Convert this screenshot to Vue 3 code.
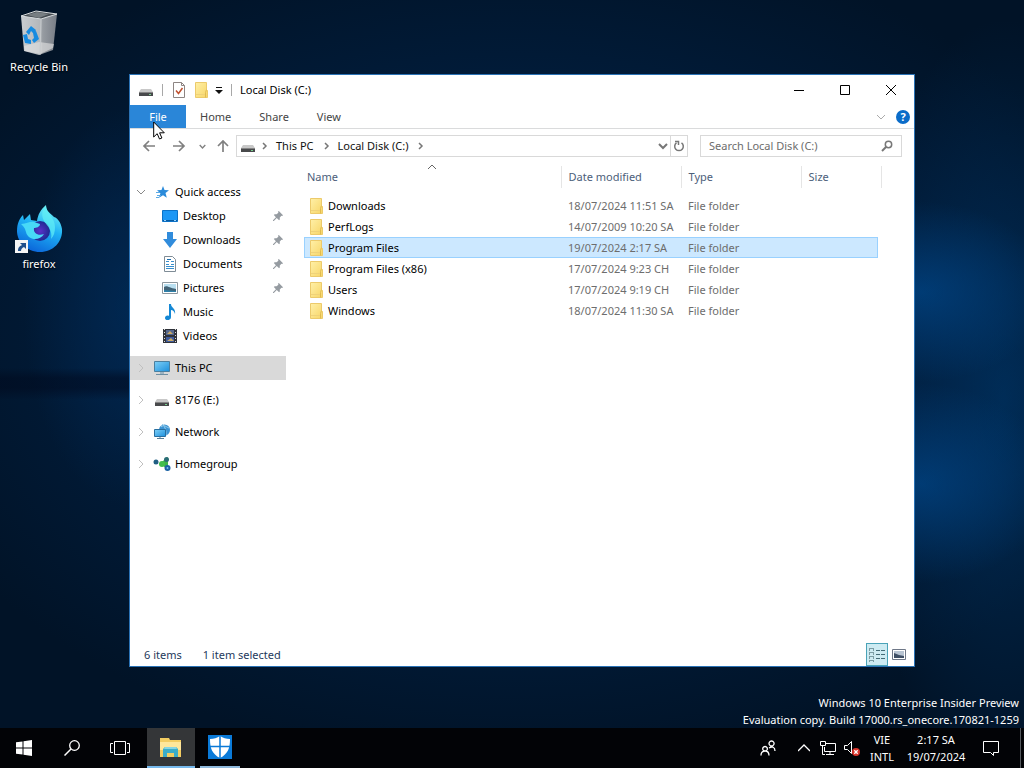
<template>
  <div class="desktop">
    <!-- shared icon shapes -->
    <svg class="icon-defs" aria-hidden="true">
      <defs>
        <linearGradient id="g-folder" x1="0" y1="0" x2="1" y2="1">
          <stop offset="0" stop-color="#fff0a8" />
          <stop offset="1" stop-color="#f7d566" />
        </linearGradient>
        <linearGradient id="g-screen" x1="0" y1="0" x2="1" y2="1">
          <stop offset="0" stop-color="#7fd0f7" />
          <stop offset="1" stop-color="#1c8fdc" />
        </linearGradient>
        <linearGradient id="g-bin" x1="0" y1="0" x2="1" y2="0">
          <stop offset="0" stop-color="#c9cdd0" />
          <stop offset="0.55" stop-color="#b2b6ba" />
          <stop offset="0.6" stop-color="#979ca2" />
          <stop offset="1" stop-color="#777d86" />
        </linearGradient>
        <linearGradient id="g-fox" x1="0.7" y1="0" x2="0.3" y2="1">
          <stop offset="0" stop-color="#74f4f5" />
          <stop offset="0.45" stop-color="#1fb2f5" />
          <stop offset="1" stop-color="#0a62d8" />
        </linearGradient>
        <radialGradient id="g-globe">
          <stop offset="0" stop-color="#5b31c9" />
          <stop offset="1" stop-color="#1d2a91" />
        </radialGradient>

        <symbol id="i-drive" viewBox="0 0 16 16">
          <path d="M3 7h10l2 3H1z" fill="#c8c8c8" />
          <path d="M1 10h14v4H1z" fill="#48494b" />
          <path d="M1 10h14v1H1z" fill="#858585" />
          <path d="M11 12h2v1h-2z" fill="#79d08e" />
        </symbol>
        <symbol id="i-folder" viewBox="0 0 16 16">
          <path d="M2.500.5h11v7l1 1v7h-12z" fill="url(#g-folder)" stroke="#ecca6b" />
          <path d="M12.500 15.500v-5l1-3" fill="none" stroke="#e0bb50" />
          <path d="M3 12.500h9" stroke="#efd27a" />
        </symbol>
        <symbol id="i-check" viewBox="0 0 16 16">
          <path d="M2.500.5h8l3 3v12h-11z" fill="#fff" stroke="#8d8583" />
          <path d="M10.500.5v3h3" fill="none" stroke="#8d8583" />
          <path d="M5 8.500l2.500 3 4-5.500" fill="none" stroke="#c0502e" stroke-width="1.500" />
        </symbol>
        <symbol id="i-star" viewBox="0 0 18 16">
          <path d="M10 2l1.500 4 4.500.200-3.500 2.800 1.300 4.700-3.800-2.500-4 2.600 1.400-4.600L4 6.200 8.500 6z" fill="#2b8bda" />
          <path d="M3 8.500h4M4 11.500h4M3 13.500h3" stroke="#5aa9e4" />
        </symbol>
        <symbol id="i-desktop" viewBox="0 0 16 16">
          <path d="M.5 2.500h15v11H.5z" fill="#1c97f5" stroke="#0b72c8" />
          <path d="M1 12.500h14" stroke="#08599f" />
          <path d="M2 12.500h2M12 12.500h2" stroke="#9ad4ff" />
        </symbol>
        <symbol id="i-down" viewBox="0 0 16 16">
          <path d="M5 0h6v7h4l-7 9-7-9h4z" fill="#318cdc" />
        </symbol>
        <symbol id="i-doc" viewBox="0 0 16 16">
          <path d="M2.500.5h8l3 3v12h-11z" fill="#fff" stroke="#7f8c96" />
          <path d="M4 5.500h3M9 5.500h3M4 8.500h3M9 8.500h3M4 10.500h8M4 12.500h8" stroke="#398fcd" />
          <path d="M5 3.500h4" stroke="#1c6eae" />
        </symbol>
        <symbol id="i-pic" viewBox="0 0 16 16">
          <path d="M.5 2.500h15v11H.5z" fill="#fff" stroke="#8c979e" />
          <path d="M2 4h12v8H2z" fill="#b9dff0" />
          <path d="M2 7c3-2 5 1 12 2v3H2z" fill="#436376" />
          <path d="M2 10l12 1v1H2z" fill="#2e80a9" />
        </symbol>
        <symbol id="i-music" viewBox="0 0 16 16">
          <path d="M7 0h2c0 4 5 4 4 10-1-3-2-4-4-4v7c0 4-6 4-6 1 0-2 2-3 4-2z" fill="#1588d5" />
        </symbol>
        <symbol id="i-video" viewBox="0 0 16 16">
          <path d="M1 1h14v14H1z" fill="#30333a" />
          <path d="M4 2h8v5H4z" fill="#55688f" />
          <path d="M4 9h8v5H4z" fill="#3e5b9d" />
          <path d="M5 6l3-3 3 3zM5 13l4-3 3 3z" fill="#c9a968" />
          <path d="M2.500 1v14M13.500 1v14" stroke="#dadada" stroke-dasharray="1 2" />
        </symbol>
        <symbol id="i-pc" viewBox="0 0 18 16">
          <path d="M1.500 1.500h15v10h-15z" fill="url(#g-screen)" stroke="#4b7f9f" />
          <path d="M7 12h4v2H7z" fill="#9db4c2" />
          <path d="M3 14.500h12" stroke="#6d8ea2" />
        </symbol>
        <symbol id="i-net" viewBox="0 0 18 16">
          <circle cx="11.500" cy="6" r="5.500" fill="#3b93d3" />
          <path d="M8 3c3-3 5 0 8 1M9 0c4 3 4 8 4 11" fill="none" stroke="#95cdec" />
          <path d="M1.500 5.500h11v7h-11z" fill="url(#g-screen)" stroke="#286e9f" />
          <path d="M4 14.500h7M7 13v2" stroke="#5a7f97" />
        </symbol>
        <symbol id="i-home" viewBox="0 0 18 16">
          <path d="M9 7l5-4v9z" fill="#3bb34a" stroke="#3bb34a" stroke-width="2" />
          <circle cx="3" cy="6" r="2.500" fill="#205e83" />
          <circle cx="9" cy="8" r="3" fill="#43bd4d" />
          <circle cx="13.500" cy="3.500" r="2.500" fill="#2a6d75" />
          <circle cx="14.500" cy="12" r="3" fill="#1b62a5" />
          <circle cx="14.500" cy="12" r="1" fill="#7bbdec" />
        </symbol>
        <symbol id="i-pin" viewBox="0 0 12 12">
          <path d="M7 0l5 5-1 1-1-.3L8 8l.3 2-1 1L4.500 8.500 1 12H0v-1l3.500-3.500L1 4.800l1-1 2.200.2L6.500 2 6 1z" fill="#959ba1" />
        </symbol>
        <symbol id="i-right" viewBox="0 0 10 10">
          <path d="M3 1l4 4-4 4" fill="none" stroke="currentColor" />
        </symbol>
        <symbol id="i-crumb" viewBox="0 0 8 10">
          <path d="M3 2l3 3-3 3" fill="none" stroke="currentColor" stroke-width="1.500" />
        </symbol>
        <symbol id="i-chev" viewBox="0 0 10 10">
          <path d="M1 3l4 4 4-4" fill="none" stroke="currentColor" />
        </symbol>
        <symbol id="i-chev-bold" viewBox="0 0 10 10">
          <path d="M1 3l4 4 4-4" fill="none" stroke="currentColor" stroke-width="2" />
        </symbol>
        <symbol id="i-arrow" viewBox="0 0 14 14">
          <path d="M13 7H2M7 2L2 7l5 5" fill="none" stroke="currentColor" stroke-width="1.700" />
        </symbol>
      </defs>
    </svg>

    <div class="shortcuts">
      <button class="shortcut" type="button">
        <svg viewBox="0 0 48 48">
          <path d="M11 7l16-4 20 2-4 36-14 5-15-4z" transform="translate(-5 1)" fill="url(#g-bin)" />
          <path d="M6 8l15-5 21 3-16 5z" fill="#444b51" stroke="#d8dcde" />
          <path d="M12 7l10-3 12 2-10 4z" fill="#777e82" />
          <path d="M9 38l15-4 15 2-1 4-13 6-15-3z" fill="#e4e4e4" opacity="0.600" />
          <path d="M26 11l-1 36" stroke="#c6cacd" />
          <path d="M11 24l5-6 5 4-2 4-3-3-2 4zM21 23l3 8-5 4-2-3 2-2-1-5zM16 36l-6-1-2-8 4-1 1 5 3 1z" fill="#168be0" />
        </svg>
        <span>Recycle Bin</span>
      </button>
      <button class="shortcut" type="button">
        <svg viewBox="0 0 48 48">
          <path
            d="M31 0c0 6 4 8 8 12 4 1 7 6 8 12 1 13-9 23-22 23S2 37 2 26c0-7 2-12 6-16l1 5 6-6 1 6 6 1c1-6 3-11 9-16z"
            fill="url(#g-fox)"
          />
          <circle cx="25" cy="26" r="10" fill="url(#g-globe)" />
          <path d="M6 19c6 0 9-3 13-2l6 2c0 3-4 4-6 4-1 6 5 8 10 6-4 7-16 7-18-2-1-4-2-5-5-8z" fill="#48d9f7" />
          <path d="M31 1c0 7 9 11 9 21 0 5-1 9-4 12 2-9-4-13-7-18-3-6-2-11 2-15z" fill="#62f0f5" opacity="0.700" />
          <path d="M0 35h13v13H0z" fill="#f5f5f5" />
          <path d="M3 46c0-4 2-5 4-6l-2-2h6v6l-2-2c-2 1-3 2-3 4z" fill="#1f4f8c" />
        </svg>
        <span>firefox</span>
      </button>
    </div>

    <main class="window">
      <header class="titlebar">
        <svg class="ico"><use href="#i-drive" /></svg>
        <i class="divider"></i>
        <button type="button" aria-label="Properties"><svg class="ico"><use href="#i-check" /></svg></button>
        <button type="button" aria-label="New folder"><svg class="ico"><use href="#i-folder" /></svg></button>
        <button type="button" aria-label="Customize" class="customize">
          <svg viewBox="0 0 8 8"><path d="M1 1.500h6" stroke="#111" /><path d="M0 4h8L4 8z" fill="#111" /></svg>
        </button>
        <i class="divider"></i>
        <h1>Local Disk (C:)</h1>
        <div class="controls">
          <button type="button" aria-label="Minimize">
            <svg viewBox="0 0 12 12"><path d="M1 6.500h10" stroke="#000" /></svg>
          </button>
          <button type="button" aria-label="Maximize">
            <svg viewBox="0 0 12 12"><path d="M1.500 1.500h9v9h-9z" fill="none" stroke="#000" /></svg>
          </button>
          <button type="button" aria-label="Close">
            <svg viewBox="0 0 12 12"><path d="M1 1l10 10M11 1L1 11" stroke="#000" /></svg>
          </button>
        </div>
      </header>

      <nav class="ribbon">
        <button v-for="tab in tabs" :key="tab" type="button" :class="{ file: tab === 'File' }">{{ tab }}</button>
        <div class="ribbon-end">
          <button type="button" aria-label="Expand ribbon" class="expand"><svg><use href="#i-chev" /></svg></button>
          <button type="button" class="help">?</button>
        </div>
      </nav>

      <div class="toolbar">
        <button type="button" aria-label="Back"><svg><use href="#i-arrow" /></svg></button>
        <button type="button" aria-label="Forward"><svg class="flip"><use href="#i-arrow" /></svg></button>
        <button type="button" aria-label="Recent locations" class="recent"><svg><use href="#i-chev-bold" /></svg></button>
        <button type="button" aria-label="Up" class="up"><svg class="turn"><use href="#i-arrow" /></svg></button>
        <div class="address">
          <svg class="ico"><use href="#i-drive" /></svg>
          <svg class="crumb-sep"><use href="#i-crumb" /></svg>
          <template v-for="crumb in crumbs" :key="crumb">
            <button type="button">{{ crumb }}</button>
            <svg class="crumb-sep"><use href="#i-crumb" /></svg>
          </template>
          <button type="button" aria-label="Previous locations" class="drop"><svg><use href="#i-chev-bold" /></svg></button>
          <button type="button" aria-label="Refresh" class="refresh">
            <svg viewBox="0 0 12 12">
              <path d="M3.500 2.800a4.300 4.300 0 1 0 5 0M2 1.500h3.500V5" fill="none" stroke="#777" stroke-width="1.500" />
            </svg>
          </button>
        </div>
        <div class="search">
          <input v-model="query" type="text" aria-label="Search Local Disk (C:)" placeholder="Search Local Disk (C:)" />
          <svg viewBox="0 0 12 12">
            <circle cx="7.500" cy="4.500" r="3.200" fill="none" stroke="#777" stroke-width="1.500" />
            <path d="M5 7L1 11" stroke="#777" stroke-width="2" />
          </svg>
        </div>
      </div>

      <div class="body">
        <aside class="tree">
          <ul v-for="group in tree" :key="group.name">
            <li>
              <button type="button" class="node" :class="{ current: group.name === 'This PC' }">
                <svg class="twist" :class="{ open: group.items }">
                  <use :href="group.items ? '#i-chev' : '#i-right'" />
                </svg>
                <svg class="group-ico"><use :href="'#i-' + group.icon" /></svg>
                {{ group.name }}
              </button>
            </li>
            <li v-for="item in group.items" :key="item.name">
              <button type="button" class="node child">
                <svg class="ico"><use :href="'#i-' + item.icon" /></svg>
                {{ item.name }}
                <svg v-if="item.pinned" class="pin"><use href="#i-pin" /></svg>
              </button>
            </li>
          </ul>
        </aside>

        <section class="files">
          <table>
            <colgroup>
              <col />
              <col class="col-mid" />
              <col class="col-mid" />
              <col class="col-size" />
            </colgroup>
            <thead>
              <tr>
                <th>Name<svg class="sort"><use href="#i-chev" /></svg></th>
                <th>Date modified</th>
                <th>Type</th>
                <th>Size</th>
              </tr>
            </thead>
            <tbody>
              <tr
                v-for="file in files"
                :key="file.name"
                :class="{ selected: file.name === selected }"
                @click="selected = file.name"
              >
                <td class="name">
                  <span><svg class="ico"><use href="#i-folder" /></svg>{{ file.name }}</span>
                </td>
                <td>{{ file.date }}</td>
                <td>File folder</td>
                <td></td>
              </tr>
            </tbody>
          </table>
        </section>
      </div>

      <footer class="status">
        <span>{{ files.length }} items</span>
        <span>1 item selected</span>
        <div class="views">
          <button type="button" aria-label="Details" class="active">
            <svg viewBox="0 0 18 16">
              <path d="M1.500 1v14M5.500 1v14" stroke="#7b9ca3" stroke-dasharray="3 1" />
              <path d="M1 1.500h5M1 5.500h5M1 9.500h5M1 13.500h5" stroke="#7b9ca3" />
              <path d="M8 3.500h4M8 7.500h4M8 11.500h4M13 3.500h4M13 7.500h4M13 11.500h4" stroke="#446c77" />
            </svg>
          </button>
          <button type="button" aria-label="Large icons">
            <svg viewBox="0 0 14 12">
              <path d="M.5.5h13v10H.5z" fill="#fff" stroke="#6e7787" />
              <path d="M2 2h10v7H2z" fill="#b8c4d2" />
              <path d="M2 4l5 2 5 1v2H2z" fill="#3f4f65" />
            </svg>
          </button>
        </div>
      </footer>
    </main>

    <p class="watermark">
      Windows 10 Enterprise Insider Preview<br />
      Evaluation copy. Build 17000.rs_onecore.170821-1259
    </p>

    <footer class="taskbar">
      <button type="button" aria-label="Start">
        <svg viewBox="0 0 16 16">
          <path d="M0 2.300l6.500-.9v6.100H0zM7.500 1.200L16 0v7.500H7.500zM0 8.500h6.500v6.100L0 13.700zM7.500 8.500H16V16l-8.500-1.200z" fill="#fff" />
        </svg>
      </button>
      <button type="button" aria-label="Search">
        <svg viewBox="0 0 16 16">
          <circle cx="10.500" cy="5.500" r="4.800" fill="none" stroke="#fff" stroke-width="1.300" />
          <path d="M7 9L.5 15.500" stroke="#fff" stroke-width="1.500" />
        </svg>
      </button>
      <button type="button" aria-label="Task view">
        <svg class="wide" viewBox="0 0 20 16">
          <path d="M4.500 1.500h11v13h-11zM3 3.500H.5v9H3M17 3.500h2.500v9H17" fill="none" stroke="#fff" />
        </svg>
      </button>
      <button type="button" aria-label="File Explorer" class="running front">
        <svg class="big" viewBox="0 0 24 24">
          <path d="M1 3h9l1 2h11v17H1z" fill="#f3cd62" />
          <path d="M1 7h21v8H1z" fill="#ffe79b" />
          <path d="M4 22v-8l2-2h11l2 2v8h-4v-4H8v4z" fill="#3badc9" />
          <path d="M6 12h11l1 2H5z" fill="#87d6e4" />
        </svg>
      </button>
      <button type="button" aria-label="Windows Defender" class="running">
        <svg class="big" viewBox="0 0 24 24">
          <path d="M0 0h24v24H0z" fill="#0a7ad8" />
          <path d="M12 1c3 2 6 3 10 3 0 9-2 15-10 19C4 19 2 13 2 4c4 0 7-1 10-3z" fill="#fff" />
          <path d="M12 1v22M2 11.500h20" stroke="#0a7ad8" stroke-width="1.500" />
        </svg>
      </button>

      <div class="tray">
        <button type="button" aria-label="People" class="people">
          <svg viewBox="0 0 16 16">
            <path
              d="M1 15.500c0-6 8-6 8 0M9 8c3-2 6-1 6 3M5 6.500a2.300 2.300 0 1 0 .1 0zM11.500 1a2.500 2.500 0 1 0 .1 0z"
              fill="none"
              stroke="#fff"
              stroke-width="1.300"
            />
          </svg>
        </button>
        <button type="button" aria-label="Show hidden icons">
          <svg class="mini" viewBox="0 0 12 12"><path d="M0 9l6-6 6 6" fill="none" stroke="#fff" stroke-width="1.300" /></svg>
        </button>
        <button type="button" aria-label="Network">
          <svg viewBox="0 0 16 16">
            <path d="M6 3.500h9.500v8H4.500V7M10 12v2.500M6 14.500h8M.5 1.500h5v4h-5zM2.500 6v8.500H5" fill="none" stroke="#fff" />
          </svg>
        </button>
        <button type="button" aria-label="Volume">
          <svg viewBox="0 0 16 16">
            <path d="M.5 5.500h3l4-4v12l-4-4h-3z" fill="none" stroke="#fff" />
            <circle cx="12" cy="12" r="4" fill="#d8342b" />
            <path d="M10.300 10.300l3.400 3.400M13.700 10.300l-3.400 3.400" stroke="#fff" stroke-width="1.300" />
          </svg>
        </button>
        <button type="button" class="lang">VIE<br />INTL</button>
        <button type="button" class="clock">2:17 SA<br />19/07/2024</button>
        <button type="button" aria-label="Action center" class="action">
          <svg viewBox="0 0 16 16">
            <path d="M.5 1.500h15v11h-5v3l-3-3h-7z" fill="none" stroke="#fff" />
          </svg>
        </button>
        <button type="button" aria-label="Show desktop" class="peek"></button>
      </div>
    </footer>

    <svg class="pointer" viewBox="0 0 12 19">
      <path d="M.7 1v15l3.500-3.300L6.500 18l2.400-1-2.300-5.200h4.700z" fill="#fff" stroke="#000" />
    </svg>
  </div>
</template>

<script setup>
  import { ref } from 'vue';

  const tabs = ['File', 'Home', 'Share', 'View'];
  const crumbs = ['This PC', 'Local Disk (C:)'];
  const query = ref('');
  const selected = ref('Program Files');

  // navigation pane
  const tree = [
    {
      name: 'Quick access',
      icon: 'star',
      items: [
        { name: 'Desktop', icon: 'desktop', pinned: true },
        { name: 'Downloads', icon: 'down', pinned: true },
        { name: 'Documents', icon: 'doc', pinned: true },
        { name: 'Pictures', icon: 'pic', pinned: true },
        { name: 'Music', icon: 'music' },
        { name: 'Videos', icon: 'video' },
      ],
    },
    { name: 'This PC', icon: 'pc' },
    { name: '8176 (E:)', icon: 'drive' },
    { name: 'Network', icon: 'net' },
    { name: 'Homegroup', icon: 'home' },
  ];

  const files = [
    { name: 'Downloads', date: '18/07/2024 11:51 SA' },
    { name: 'PerfLogs', date: '14/07/2009 10:20 SA' },
    { name: 'Program Files', date: '19/07/2024 2:17 SA' },
    { name: 'Program Files (x86)', date: '17/07/2024 9:23 CH' },
    { name: 'Users', date: '17/07/2024 9:19 CH' },
    { name: 'Windows', date: '18/07/2024 11:30 SA' },
  ];
</script>

<style>
  body {
    background: #010e22;
  }
</style>

<style scoped>
  .desktop {
    position: relative;
    min-height: 100vh;
    display: flex;
    flex-direction: column;
    overflow: hidden;
    font-family: 'Noto Sans', 'Open Sans', sans-serif;
    font-size: 11px;
    line-height: 16px;
    color: #000;
    background:
      linear-gradient(to bottom, transparent 368px, rgba(0, 8, 28, 0.5) 378px, rgba(0, 8, 28, 0.5) 388px, transparent 400px) 0 0 / 130px 100% no-repeat,
      radial-gradient(ellipse 130px 100px at 90% 63%, rgba(0, 76, 148, 0.6), transparent),
      radial-gradient(ellipse 130px 90px at 90% 38%, rgba(0, 76, 148, 0.6), transparent),
      radial-gradient(ellipse 150px 380px at 98% 52%, rgba(0, 58, 112, 0.6), transparent),
      radial-gradient(ellipse 110px 200px at 13% 40%, rgba(0, 48, 98, 0.6), transparent),
      radial-gradient(ellipse 640px 420px at 50% 45%, #012a58, #011327);
  }

  button {
    border: 0;
    padding: 0;
    background: none;
    font: inherit;
    color: inherit;
    display: flex;
    align-items: center;
    justify-content: center;
  }

  svg {
    display: block;
    flex-shrink: 0;
  }

  .icon-defs {
    position: absolute;
    width: 0;
    height: 0;
  }

  .ico {
    width: 16px;
    height: 16px;
  }

  /* desktop shortcuts */
  .shortcuts {
    flex: 1;
    display: flex;
    flex-direction: column;
    align-items: flex-start;
    gap: 130px;
    padding-top: 8px;
  }

  .shortcut {
    width: 78px;
    flex-direction: column;
    gap: 3px;
    color: #fff;
    text-shadow: 0 1px 2px #000;
  }

  .shortcut svg {
    width: 48px;
    height: 48px;
  }

  /* explorer window */
  .window {
    position: absolute;
    top: 74px;
    right: 109px;
    bottom: 101px;
    left: 129px;
    display: flex;
    flex-direction: column;
    background: #fff;
    border: 1px solid #2a72b5;
  }

  .titlebar {
    display: flex;
    align-items: center;
    height: 30px;
    padding-left: 8px;
    gap: 6px;
  }

  .divider {
    width: 1px;
    height: 12px;
    margin: 0 2px;
    background: #a8a8a8;
  }

  .customize svg {
    width: 8px;
    height: 8px;
  }

  h1 {
    margin: 0;
    font-size: 11px;
    font-weight: 400;
  }

  .controls {
    display: flex;
    align-self: stretch;
    margin-left: auto;
  }

  .controls button {
    width: 46px;
  }

  .controls svg {
    width: 12px;
    height: 12px;
  }

  .ribbon {
    display: flex;
    height: 23px;
    border-bottom: 1px solid #dadbdc;
    color: #444;
  }

  .ribbon > button {
    padding: 0 14px;
  }

  .ribbon > .file {
    width: 56px;
    background: #2a86d8;
    color: #fff;
  }

  .ribbon-end {
    display: flex;
    align-items: center;
    gap: 10px;
    margin-left: auto;
    padding-right: 4px;
  }

  .expand {
    color: #aaa;
  }

  .expand svg,
  .drop svg {
    width: 10px;
    height: 10px;
  }

  .help {
    width: 14px;
    height: 14px;
    border-radius: 50%;
    background: #0a6cc9;
    color: #fff;
    font-weight: 700;
  }

  .toolbar {
    display: flex;
    align-items: center;
    padding: 6px 12px 5px;
    color: #808080;
  }

  .toolbar > button svg {
    width: 14px;
    height: 14px;
  }

  .toolbar > button + button {
    margin-left: 16px;
  }

  .toolbar > button + .recent {
    margin-left: 13px;
  }

  .toolbar > .recent svg {
    width: 7px;
    height: 7px;
  }

  .toolbar > button + .up {
    margin-left: 10px;
  }

  .flip {
    transform: rotate(180deg);
  }

  .turn {
    transform: rotate(90deg);
  }

  .address {
    flex: 1;
    display: flex;
    align-items: center;
    height: 20px;
    margin-left: 6px;
    padding-left: 3px;
    gap: 8px;
    border: 1px solid #d9d9d9;
    color: #111;
  }

  .address .ico {
    margin-right: -4px;
  }

  .crumb-sep {
    width: 8px;
    height: 10px;
    color: #777;
  }

  .drop {
    margin-left: auto;
    margin-right: -6px;
    color: #777;
  }

  .refresh {
    width: 17px;
    align-self: stretch;
    border-left: 1px solid #d9d9d9;
  }

  .refresh svg,
  .search svg {
    width: 12px;
    height: 12px;
  }

  .search {
    display: flex;
    align-items: center;
    width: 184px;
    height: 20px;
    margin-left: 12px;
    padding: 0 8px;
    border: 1px solid #d9d9d9;
  }

  .search input {
    flex: 1;
    min-width: 0;
    padding: 0;
    border: 0;
    outline: 0;
    background: none;
    font: inherit;
    color: #000;
  }

  .search input::placeholder {
    color: #6d6d6d;
    opacity: 1;
  }

  .body {
    flex: 1;
    display: flex;
    min-height: 0;
  }

  /* navigation pane */
  .tree {
    width: 156px;
    padding-top: 18px;
  }

  ul {
    margin: 0 0 8px;
    padding: 0;
    list-style: none;
  }

  .node {
    width: 100%;
    height: 24px;
    justify-content: flex-start;
    padding-left: 6px;
  }

  .node.current {
    background: #d9d9d9;
  }

  .twist {
    width: 10px;
    height: 10px;
    margin-right: 7px;
    color: #c0c0c0;
  }

  .twist.open {
    color: #888;
  }

  .group-ico {
    width: 18px;
    height: 16px;
    margin-right: 4px;
  }

  .child {
    padding-left: 32px;
    padding-right: 3px;
  }

  .child .ico {
    margin-right: 5px;
  }

  .pin {
    width: 10px;
    height: 10px;
    margin-left: auto;
  }

  /* file list */
  .files {
    flex: 1;
    padding: 4px 36px 0 18px;
  }

  table {
    width: 100%;
    table-layout: fixed;
    border-collapse: collapse;
  }

  .col-mid {
    width: 120px;
  }

  .col-size {
    width: 77px;
  }

  th,
  td {
    padding: 0 0 0 7px;
    text-align: left;
    font-weight: 400;
    white-space: nowrap;
    color: #6d6d6d;
  }

  th {
    position: relative;
    height: 22px;
    color: #4c607a;
    border-left: 1px solid #e5e5e5;
  }

  th:first-child {
    padding-left: 3px;
    border-left: 0;
  }

  /* closing separator sits just past the row highlight */
  th:last-child::after {
    content: '';
    position: absolute;
    top: 0;
    right: -4px;
    bottom: 0;
    border-right: 1px solid #e5e5e5;
  }

  .sort {
    position: absolute;
    top: -4px;
    left: 50%;
    width: 10px;
    height: 10px;
    margin-left: -5px;
    color: #666;
    transform: rotate(180deg);
  }

  td {
    height: 21px;
  }

  tbody::before {
    content: '';
    display: block;
    height: 7px;
  }

  .name {
    padding-left: 4px;
    color: #000;
  }

  .name span {
    display: flex;
    align-items: center;
    gap: 4px;
  }

  .selected {
    background: #cce8ff;
    outline: 1px solid #99d1ff;
    outline-offset: -1px;
  }

  .status {
    display: flex;
    align-items: center;
    height: 23px;
    padding-left: 14px;
    gap: 21px;
    color: #1e395b;
  }

  .views {
    display: flex;
    align-items: center;
    gap: 4px;
    margin-left: auto;
    padding-right: 8px;
  }

  .views .active {
    width: 22px;
    height: 23px;
    border: 1px solid #4aa3b8;
    background: #cdebf2;
  }

  .views svg {
    width: 14px;
    height: 12px;
  }

  .views .active svg {
    width: 18px;
    height: 16px;
  }

  /* build watermark */
  .watermark {
    margin: 0;
    padding: 0 5px 0 0;
    text-align: right;
    line-height: 17px;
    color: #fff;
  }

  /* taskbar */
  .taskbar {
    display: flex;
    height: 40px;
    background: #020306;
    color: #fff;
  }

  .taskbar > button {
    width: 48px;
    box-sizing: border-box;
  }

  .taskbar svg {
    width: 16px;
    height: 16px;
  }

  .taskbar .wide {
    width: 20px;
  }

  .taskbar .big {
    width: 24px;
    height: 24px;
  }

  .taskbar > .running {
    width: 40px;
    margin-left: 5px;
    border-bottom: 2px solid #8fb9dc;
  }

  .taskbar > .front {
    width: 48px;
    margin-left: 3px;
    background: #343638;
    border-bottom-color: #76b9ed;
  }

  .tray {
    display: flex;
    align-items: stretch;
    margin-left: auto;
  }

  .tray > button {
    width: 24px;
  }

  .tray > .people {
    width: 48px;
  }

  .taskbar .mini {
    width: 12px;
    height: 12px;
  }

  .tray > .lang {
    width: 36px;
    line-height: 17px;
  }

  .tray > .clock {
    width: 72px;
    line-height: 17px;
  }

  .tray > .action {
    width: 38px;
  }

  .tray > .peek {
    width: 4px;
    margin-left: 10px;
    border-left: 1px solid #55595e;
  }

  .pointer {
    position: absolute;
    top: 121px;
    left: 153px;
    width: 12px;
    height: 19px;
  }
</style>
